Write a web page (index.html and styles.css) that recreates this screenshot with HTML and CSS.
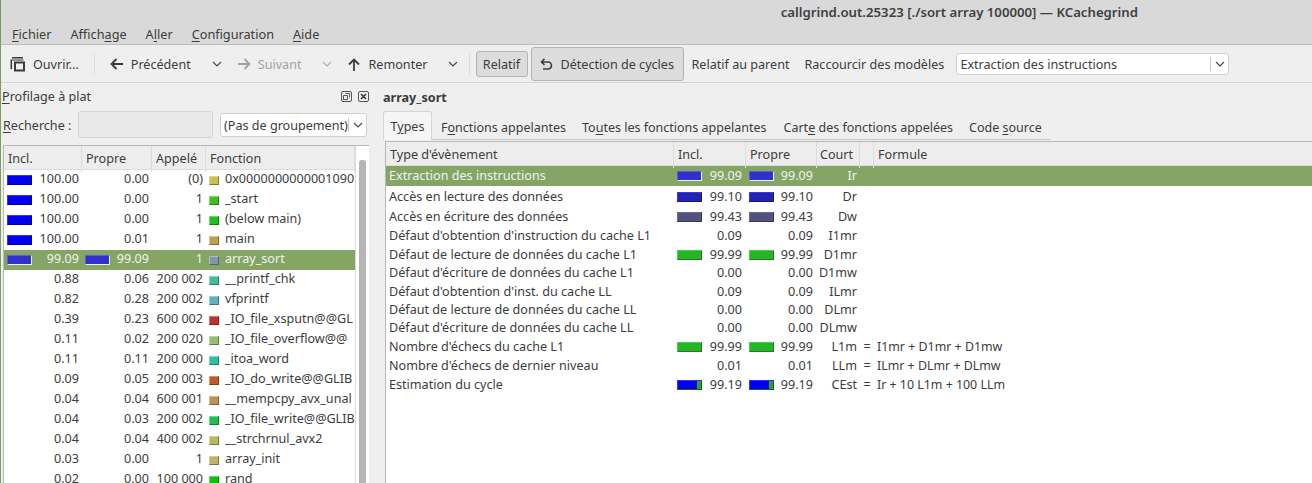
FILE: index.html
```html
<!DOCTYPE html>
<html lang="fr">
<head>
<meta charset="utf-8">
<title>KCachegrind</title>
<link rel="stylesheet" href="styles.css">
</head>
<body>
<div class="app">
  <header class="chrome">
    <div class="titlebar">callgrind.out.25323 [./sort array 100000] — KCachegrind</div>
    <nav class="menubar">
      <span><u>F</u>ichier</span><span>Affich<u>a</u>ge</span><span>A<u>l</u>ler</span><span><u>C</u>onfiguration</span><span><u>A</u>ide</span>
    </nav>
  </header>
  <div class="toolbar">
    <span class="tool t-open"><svg class="ico" width="16" height="16" viewBox="0 0 16 16"><path d="M2 1h11v1.6H2zM0.5 3.5h13v1H0.5zM0.5 4h1.6v9H0.5z" fill="#3c3c3c"/><path d="M4 5.5h11v10H4zM6 7.500v6h7v-6z" fill="#3c3c3c" fill-rule="evenodd"/></svg>Ouvrir...</span>
    <span class="sep s1"></span>
    <span class="tool t-prev"><svg class="ico" width="14" height="12" viewBox="0 0 14 12"><path d="M13 6H2M6.500 1L1.500 6l5 5" fill="none" stroke="#3c3c3c" stroke-width="1.800"/></svg>Précédent</span>
    <svg class="chev c1" width="10" height="6" viewBox="0 0 10 6"><path d="M1 1l4 4 4-4" fill="none" stroke="#4a4a4a" stroke-width="1.200"/></svg>
    <span class="tool t-next off"><svg class="ico" width="14" height="12" viewBox="0 0 14 12"><path d="M1 6h11M7.500 1l5 5-5 5" fill="none" stroke="#a0a0a0" stroke-width="1.800"/></svg>Suivant</span>
    <svg class="chev c2" width="10" height="6" viewBox="0 0 10 6"><path d="M1 1l4 4 4-4" fill="none" stroke="#b0b0b0" stroke-width="1.200"/></svg>
    <span class="tool t-up"><svg class="ico" width="14" height="13" viewBox="0 0 14 13"><path d="M7 13V2M2 6.500l5-5 5 5" fill="none" stroke="#3c3c3c" stroke-width="1.800"/></svg>Remonter</span>
    <svg class="chev c3" width="10" height="6" viewBox="0 0 10 6"><path d="M1 1l4 4 4-4" fill="none" stroke="#4a4a4a" stroke-width="1.200"/></svg>
    <span class="sep s2"></span>
    <span class="toggle t-rel">Relatif</span>
    <span class="toggle t-cyc"><svg class="ico" width="13" height="12" viewBox="0 0 13 12"><path d="M1.500 4h6.500a3.300 3.300 0 0 1 0 7H3M4.500 0.800L1.500 4l3 3" fill="none" stroke="#3c3c3c" stroke-width="1.600"/></svg>Détection de cycles</span>
    <span class="tool t-par">Relatif au parent</span>
    <span class="tool t-short">Raccourcir des modèles</span>
    <span class="combo t-combo"><span class="combo-text">Extraction des instructions</span><span class="combo-arrow"><svg width="10" height="6" viewBox="0 0 10 6"><path d="M1 1l4 4 4-4" fill="none" stroke="#4a4a4a" stroke-width="1.200"/></svg></span></span>
  </div>
  <main class="main">
    <section class="dock">
      <div class="dock-title">
        <span><u>P</u>rofilage à plat</span>
        <span class="dock-icons">
          <svg width="11" height="11" viewBox="0 0 11 11"><rect x="0.500" y="0.500" width="10" height="10" rx="1.500" fill="none" stroke="#555"/><path d="M4.500 2.500h4v4M2.500 4.500h4v4h-4z" fill="none" stroke="#555"/></svg>
          <svg width="11" height="11" viewBox="0 0 11 11"><rect x="0.500" y="0.500" width="10" height="10" rx="1.500" fill="none" stroke="#555"/><path d="M3 3l5 5M8 3l-5 5" stroke="#333" stroke-width="1.500"/></svg>
        </span>
      </div>
      <div class="search">
        <span class="search-label"><u>R</u>echerche :</span>
        <span class="search-input"></span>
        <span class="combo group"><span class="combo-text">(Pas de groupement)</span><span class="combo-arrow"><svg width="10" height="6" viewBox="0 0 10 6"><path d="M1 1l4 4 4-4" fill="none" stroke="#4a4a4a" stroke-width="1.200"/></svg></span></span>
      </div>
      <div class="flat">
        <div class="flat-cols">
          <div class="frow fhead"><span>Incl.</span><span>Propre</span><span>Appelé</span><span>Fonction</span></div>
          <div class="frow"><span class="cell"><i class="bar b-full"></i>100.00</span><span class="cell">0.00</span><span class="cell">(0)</span><span class="fn"><i class="sw k1"></i>0x0000000000001090</span></div>
          <div class="frow"><span class="cell"><i class="bar b-full"></i>100.00</span><span class="cell">0.00</span><span class="cell">1</span><span class="fn"><i class="sw k2"></i>_start</span></div>
          <div class="frow"><span class="cell"><i class="bar b-full"></i>100.00</span><span class="cell">0.00</span><span class="cell">1</span><span class="fn"><i class="sw k3"></i>(below main)</span></div>
          <div class="frow"><span class="cell"><i class="bar b-full"></i>100.00</span><span class="cell">0.01</span><span class="cell">1</span><span class="fn"><i class="sw k4"></i>main</span></div>
          <div class="frow sel"><span class="cell"><i class="bar b-sel"></i>99.09</span><span class="cell"><i class="bar b-sel"></i>99.09</span><span class="cell">1</span><span class="fn"><i class="sw k5"></i>array_sort</span></div>
          <div class="frow"><span class="cell">0.88</span><span class="cell">0.06</span><span class="cell">200 002</span><span class="fn"><i class="sw k6"></i>__printf_chk</span></div>
          <div class="frow"><span class="cell">0.82</span><span class="cell">0.28</span><span class="cell">200 002</span><span class="fn"><i class="sw k7"></i>vfprintf</span></div>
          <div class="frow"><span class="cell">0.39</span><span class="cell">0.23</span><span class="cell">600 002</span><span class="fn"><i class="sw k8"></i>_IO_file_xsputn@@GL</span></div>
          <div class="frow"><span class="cell">0.11</span><span class="cell">0.02</span><span class="cell">200 020</span><span class="fn"><i class="sw k9"></i>_IO_file_overflow@@</span></div>
          <div class="frow"><span class="cell">0.11</span><span class="cell">0.11</span><span class="cell">200 000</span><span class="fn"><i class="sw k10"></i>_itoa_word</span></div>
          <div class="frow"><span class="cell">0.09</span><span class="cell">0.05</span><span class="cell">200 003</span><span class="fn"><i class="sw k11"></i>_IO_do_write@@GLIB</span></div>
          <div class="frow"><span class="cell">0.04</span><span class="cell">0.04</span><span class="cell">600 001</span><span class="fn"><i class="sw k12"></i>__mempcpy_avx_unal</span></div>
          <div class="frow"><span class="cell">0.04</span><span class="cell">0.03</span><span class="cell">200 002</span><span class="fn"><i class="sw k13"></i>_IO_file_write@@GLIB</span></div>
          <div class="frow"><span class="cell">0.04</span><span class="cell">0.04</span><span class="cell">400 002</span><span class="fn"><i class="sw k14"></i>__strchrnul_avx2</span></div>
          <div class="frow"><span class="cell">0.03</span><span class="cell">0.00</span><span class="cell">1</span><span class="fn"><i class="sw k15"></i>array_init</span></div>
          <div class="frow"><span class="cell">0.02</span><span class="cell">0.00</span><span class="cell">100 000</span><span class="fn"><i class="sw k16"></i>rand</span></div>
        </div>
        <div class="scroll"><div class="scroll-thumb"></div></div>
      </div>
    </section>
    <section class="detail">
      <div class="detail-title">array_sort</div>
      <div class="tabs">
        <span class="tab active">T<u>y</u>pes</span>
        <span class="tab">F<u>o</u>nctions appelantes</span>
        <span class="tab tab-wide">To<u>u</u>tes les fonctions appelantes</span>
        <span class="tab">Cart<u>e</u> des fonctions appelées</span>
        <span class="tab">Code <u>s</u>ource</span>
      </div>
      <div class="types">
        <div class="trow thead"><span>Type d'évènement</span><span>Incl.</span><span>Propre</span><span>Court</span><span></span><span>Formule</span></div>
        <div class="trow sel h20"><span>Extraction des instructions</span><span class="cell"><i class="bar b-sel"></i>99.09</span><span class="cell"><i class="bar b-sel"></i>99.09</span><span class="cell">Ir</span><span></span><span></span></div>
        <div class="trow h21"><span>Accès en lecture des données</span><span class="cell"><i class="bar b-dr"></i>99.10</span><span class="cell"><i class="bar b-dr"></i>99.10</span><span class="cell">Dr</span><span></span><span></span></div>
        <div class="trow h20"><span>Accès en écriture des données</span><span class="cell"><i class="bar b-dw"></i>99.43</span><span class="cell"><i class="bar b-dw"></i>99.43</span><span class="cell">Dw</span><span></span><span></span></div>
        <div class="trow h18"><span>Défaut d'obtention d'instruction du cache L1</span><span class="cell">0.09</span><span class="cell">0.09</span><span class="cell">I1mr</span><span></span><span></span></div>
        <div class="trow h19"><span>Défaut de lecture de données du cache L1</span><span class="cell"><i class="bar b-gr"></i>99.99</span><span class="cell"><i class="bar b-gr"></i>99.99</span><span class="cell">D1mr</span><span></span><span></span></div>
        <div class="trow h18"><span>Défaut d'écriture de données du cache L1</span><span class="cell">0.00</span><span class="cell">0.00</span><span class="cell">D1mw</span><span></span><span></span></div>
        <div class="trow h19"><span>Défaut d'obtention d'inst. du cache LL</span><span class="cell">0.09</span><span class="cell">0.09</span><span class="cell">ILmr</span><span></span><span></span></div>
        <div class="trow h18"><span>Défaut de lecture de données du cache LL</span><span class="cell">0.00</span><span class="cell">0.00</span><span class="cell">DLmr</span><span></span><span></span></div>
        <div class="trow h18"><span>Défaut d'écriture de données du cache LL</span><span class="cell">0.00</span><span class="cell">0.00</span><span class="cell">DLmw</span><span></span><span></span></div>
        <div class="trow h19"><span>Nombre d'échecs du cache L1</span><span class="cell"><i class="bar b-gr"></i>99.99</span><span class="cell"><i class="bar b-gr"></i>99.99</span><span class="cell">L1m</span><span class="eq">=</span><span class="formula">I1mr + D1mr + D1mw</span></div>
        <div class="trow h19"><span>Nombre d'échecs de dernier niveau</span><span class="cell">0.01</span><span class="cell">0.01</span><span class="cell">LLm</span><span class="eq">=</span><span class="formula">ILmr + DLmr + DLmw</span></div>
        <div class="trow h19"><span>Estimation du cycle</span><span class="cell"><i class="bar b-ce"></i>99.19</span><span class="cell"><i class="bar b-ce"></i>99.19</span><span class="cell">CEst</span><span class="eq">=</span><span class="formula">Ir + 10 L1m + 100 LLm</span></div>
      </div>
    </section>
  </main>
</div>
</body>
</html>
```
FILE: styles.css
```css
* { box-sizing: border-box; }
html, body { margin: 0; height: 483px; overflow: hidden; }
body { font: 12.6px/16px "Noto Sans", "Open Sans", sans-serif; color: #3c3c3c; background: #efefef; }
u { text-underline-offset: 2px; }
i { font-style: normal; display: block; }

.app { height: 483px; display: flex; flex-direction: column; border-left: 1px solid #7a9f57; overflow: hidden; }

.chrome { height: 45px; background: #d9d9d9; border-bottom: 1px solid #bdbdbd; flex: none; }
.titlebar { height: 25px; padding: 4px 174px 0 0; text-align: right; font-weight: 600; font-size: 13.2px; color: #3f3f3f; }
.menubar { display: flex; gap: 19px; padding: 1px 0 0 11px; font-size: 12.7px; }

.toolbar { height: 38px; padding-top: 1px; flex: none; display: flex; align-items: center; border-bottom: 1px solid #d4d4d4; }
.tool { display: inline-flex; align-items: center; white-space: nowrap; padding-top: 2px; }
.tool.off { color: #a3a3a3; }
.ico { flex: none; margin-top: -2px; }
.t-open { margin-left: 9px; } .t-open .ico { margin-right: 7px; }
.sep { width: 1px; height: 22px; background: #dcdcdc; flex: none; }
.s1 { margin-left: 15px; }
.t-prev { margin-left: 15px; } .t-prev .ico { margin-right: 7px; }
.chev { flex: none; }
.c1 { margin-left: 21px; }
.t-next { margin-left: 15px; } .t-next .ico { margin-right: 7px; }
.c2 { margin-left: 20px; }
.t-up { margin-left: 15px; } .t-up .ico { margin-right: 8px; }
.c3 { margin-left: 20px; }
.s2 { margin-left: 11px; }
.toggle { display: inline-flex; align-items: center; white-space: nowrap; background: #dcdcdc; border: 1px solid #b4b4b4; border-radius: 3px; flex: none; padding-top: 2px; }
.t-rel { height: 26px; width: 52px; margin-left: 6px; justify-content: center; }
.t-cyc { height: 34px; width: 153px; margin-left: 3px; padding-left: 8px; } .t-cyc .ico { margin-right: 8px; }
.t-par { margin-left: 8px; }
.t-short { margin-left: 15px; }

.combo { display: flex; align-items: center; background: #fff; border: 1px solid #d0d0d0; border-radius: 3px; flex: none; overflow: hidden; }
.combo-text { flex: 1; padding: 2px 0 0 3px; white-space: nowrap; overflow: hidden; }
.combo-arrow { flex: none; width: 18px; height: 14px; border-left: 1px solid #c8c8c8; display: flex; align-items: center; justify-content: center; }
.t-combo { width: 273px; height: 22px; margin-left: 12px; }

.main { flex: 1; display: flex; min-height: 0; }
.dock { width: 368px; flex: none; display: flex; flex-direction: column; }
.dock-title { height: 26px; flex: none; padding: 6px 0 0 1px; display: flex; justify-content: space-between; }
.dock-icons { display: flex; gap: 6px; padding: 2px 0 0; }
.search { height: 31px; flex: none; display: flex; align-items: center; padding-left: 2px; }
.search-label { width: 75px; flex: none; padding-top: 2px; }
.search-input { width: 135px; height: 27px; background: #e9e9e9; border: 1px solid #d4d4d4; border-radius: 3px; flex: none; }
.group { width: 147px; height: 24px; margin-left: 7px; }
.group .combo-arrow { width: 18px; }

.flat { margin: 5px 0 0 2px; flex: 1; display: flex; background: #fff; border-top: 1px solid #b8b8b8; border-left: 1px solid #b8b8b8; min-height: 0; overflow: hidden; }
.flat-cols { width: 351px; flex: none; }
.frow { display: grid; grid-template-columns: 78px 70px 54px 149px; height: 20px; line-height: 18px; white-space: nowrap; }
.fhead { height: 24px; line-height: 26px; background: #ededed; border-bottom: 1px solid #dcdcdc; }
.fhead span { padding-left: 4px; border-right: 1px solid #dcdcdc; }
.cell { display: flex; align-items: center; justify-content: flex-end; padding-right: 3px; overflow: hidden; }
.cell .bar { margin-right: auto; margin-left: 3px; }
.frow .cell { align-items: flex-start; }
.frow .bar { margin-top: 5px; }
.fn { display: flex; align-items: flex-start; overflow: hidden; padding-left: 3px; }
.sel { background: #85a564; color: #f2f2f2; }

.bar { width: 25px; height: 10px; flex: none; border: 1px solid; }
.b-full { background: #0000ee; border-color: #3333ff #0000a0 #0000a0 #3333ff; }
.b-sel { background: #3030cc; border-color: #5a5ae0 #f0f0f0 #f0f0f0 #5a5ae0; }
.b-dr { background: #2222b4; border-color: #3a3ad0 #181880 #181880 #3a3ad0; }
.b-dw { background: #52527e; border-color: #6a6a9a #3a3a58 #3a3a58 #6a6a9a; }
.b-gr { background: #28b428; border-color: #44d444 #1a801a #1a801a #44d444; }
.b-ce { background: linear-gradient(90deg, #0000ee 0 19px, #28a428 19px); border-color: #3333ff #0a6020 #0a6020 #3333ff; }

.sw { width: 10px; height: 9px; margin: 6px 6px 0 0; flex: none; border: 1px solid; border-color: rgba(255,255,255,.35) rgba(0,0,0,.35) rgba(0,0,0,.35) rgba(255,255,255,.35); }
.k1 { background: #c8c050; } .k2 { background: #40c020; } .k3 { background: #20c020; } .k4 { background: #c0a050; }
.k5 { background: #8098a8; } .k6 { background: #40c090; } .k7 { background: #60b0c0; } .k8 { background: #c03030; }
.k9 { background: #90c070; } .k10 { background: #30c0a0; } .k11 { background: #c05a28; } .k12 { background: #c09058; }
.k13 { background: #20c050; } .k14 { background: #b8b860; } .k15 { background: #c0b068; } .k16 { background: #10c010; }

.scroll { flex: 1; position: relative; border-left: 1px solid #dcdcdc; }
.scroll-thumb { position: absolute; left: 3px; top: 14px; bottom: 0; width: 7px; background: #b5b5b5; border-radius: 3px 3px 0 0; }

.detail { flex: 1; min-width: 0; display: flex; flex-direction: column; padding-left: 14px; }
.detail-title { height: 28px; flex: none; padding-top: 7px; font-weight: 700; }
.tabs { height: 29px; width: 667px; flex: none; display: flex; align-items: flex-end; border-bottom: 1px solid #c4c4c4; white-space: nowrap; font-size: 12.5px; }
.tab { flex: none; height: 28px; line-height: 33px; margin-right: 16px; }
.tab-wide { margin-right: 17px; }
.tab.active { width: 49px; height: 29px; margin-bottom: -1px; background: #f5f5f5; border: 1px solid #d4d4d4; border-bottom: 0; border-radius: 3px 3px 0 0; text-align: center; line-height: 29px; margin-right: 9px; }
.types { flex: 1; margin: 1px 0 0 2px; background: #fff; border-top: 1px solid #b8b8b8; border-left: 1px solid #b8b8b8; overflow: hidden; }
.trow { display: grid; grid-template-columns: 288px 72px 71px 43px 14px 1fr; white-space: nowrap; align-items: center; }
.trow > span:first-child { padding-left: 3px; }
.h21 { height: 21px; } .h20 { height: 20px; } .h19 { height: 19px; } .h18 { height: 18px; }
.thead { height: 24px; background: #ededed; border-bottom: 1px solid #dcdcdc; align-items: stretch; line-height: 26px; }
.trow.thead span { padding-left: 4px; border-right: 1px solid #dcdcdc; }
.trow.thead span:nth-child(4) { padding-left: 3px; }
.trow.thead span:last-child { border-right: 0; }
.trow .cell { padding-right: 4px; }
.trow .cell:nth-child(4) { padding-right: 3px; }
.eq { text-align: center; }
.formula { padding-left: 3px; font-size: 12.4px; }
```
